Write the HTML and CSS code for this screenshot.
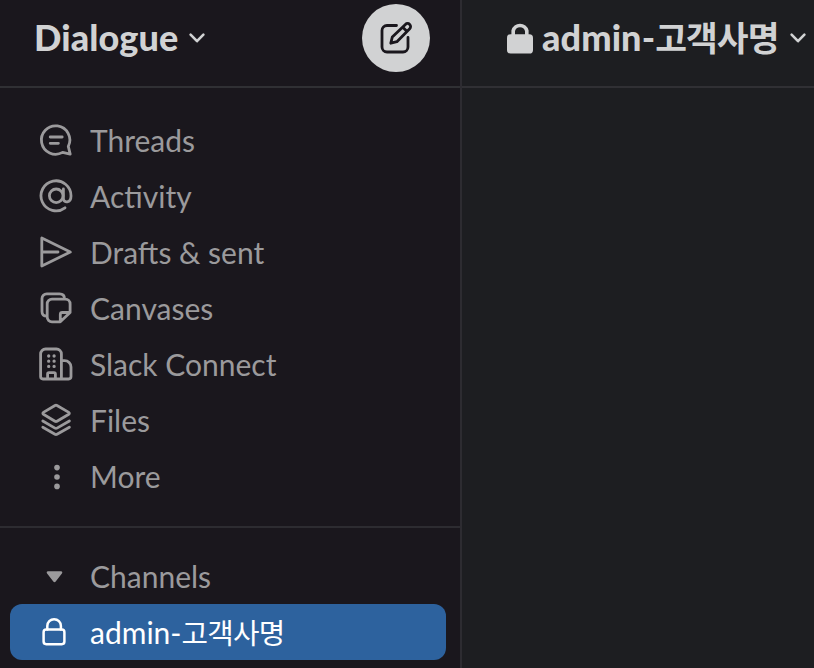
FILE: index.html
```html
<!DOCTYPE html>
<html lang="en">
<head>
<meta charset="utf-8">
<title>Dialogue</title>
<link rel="stylesheet" href="styles.css">
</head>
<body>
<div class="app">
  <aside class="sidebar">
    <header class="bar workspace">
      <h1 class="title">Dialogue</h1>
      <svg class="chevron" viewBox="0 0 20 14"><path d="M3.6 3.6 10 10.2 16.4 3.6"/></svg>
      <button class="compose" aria-label="New message">
        <svg class="icon" viewBox="0 0 36 36"><path d="M18.5 5.5H9a5 5 0 0 0-5 5V27a5 5 0 0 0 5 5h16a5 5 0 0 0 5-5v-9.5"/><path d="M12.8 23.2 14.3 17 27.4 4.4a3 3 0 0 1 4.3 4.3L18.9 21.7ZM24.8 7.2l4 4"/></svg>
      </button>
    </header>
    <nav class="nav">
      <a class="row"><svg class="icon" viewBox="0 0 36 36"><path d="M30.3 24.4A14.2 14.2 0 1 0 24.6 30.4L32.2 32.2ZM12.2 15h12M12.2 21.3h8.2"/></svg><span>Threads</span></a>
      <a class="row"><svg class="icon" viewBox="0 0 36 36"><circle cx="18.2" cy="17.8" r="6.8"/><path d="M25.4 11v9.2c0 5.4 7.6 5.2 7.6-2.2A15 15 0 1 0 27 29.8"/></svg><span>Activity</span></a>
      <a class="row"><svg class="icon" viewBox="0 0 36 36"><path d="M3.8 4V32L32.3 18ZM3.8 18H20"/></svg><span>Drafts &amp; sent</span></a>
      <a class="row"><svg class="icon" viewBox="0 0 36 36"><path d="M8.8 26.2C5.6 26.2 4 24.4 4 21.5V8.5A4.7 4.7 0 0 1 8.7 3.8H21.5C24.6 3.8 26.5 5.6 26.5 8.8M22.3 31.8H14a4.8 4.8 0 0 1-4.8-4.8V14A4.8 4.8 0 0 1 14 9.2H27.3A4.8 4.8 0 0 1 32.1 14v8.5ZM22.3 31.8V24.5a2 2 0 0 1 2-2h7.8"/></svg><span>Canvases</span></a>
      <a class="row"><svg class="icon" viewBox="0 0 36 36"><path d="M23.4 33H5a2.4 2.4 0 0 1-2.4-2.4V8A5 5 0 0 1 7.6 3H18.4a5 5 0 0 1 5 5ZM23.4 14.6h3.2a6.4 6.4 0 0 1 6.4 6.4v9.6A2.4 2.4 0 0 1 30.6 33h-7.2M9.6 33v-5a1.4 1.4 0 0 1 1.4-1.4h5a1.4 1.4 0 0 1 1.4 1.4v5"/><path class="dots" d="M10.7 10h0M16.1 10h0M10.7 15.2h0M16.1 15.2h0M10.7 20.4h0M16.1 20.4h0"/></svg><span>Slack Connect</span></a>
      <a class="row"><svg class="icon" viewBox="0 0 36 36"><path d="M17 3.5 5.4 10.4a1.1 1.1 0 0 0 0 1.9L17 19.2a2 2 0 0 0 2 0l11.8-6.9a1.1 1.1 0 0 0 0-1.9L19 3.5a2 2 0 0 0-2 0ZM4.8 19 17 26.1a2 2 0 0 0 2 0L31.4 19M4.8 25.2 17 32.3a2 2 0 0 0 2 0l12.4-7.1"/></svg><span>Files</span></a>
      <a class="row"><svg class="icon solid" viewBox="0 0 36 36"><circle cx="19" cy="9.6" r="2.8"/><circle cx="19" cy="19" r="2.8"/><circle cx="19" cy="28.4" r="2.8"/></svg><span>More</span></a>
    </nav>
    <section class="channels">
      <a class="row"><svg class="icon solid" viewBox="0 0 36 36"><path d="M10 13.3h13c1.3 0 1.7 1.2.9 2.1l-6.2 8.1q-1.2 1.6-2.4 0L9.1 15.4c-.8-.9-.4-2.1.9-2.1Z"/></svg><span>Channels</span></a>
      <a class="row selected"><svg class="icon" viewBox="0 0 36 36"><rect x="5.6" y="15.6" width="20.8" height="14.6" rx="2.6"/><path d="M9.3 15.6V12a6.8 6.8 0 0 1 13.6 0v3.6"/></svg><span>admin-<span class="ko" lang="ko">고객사명</span></span></a>
    </section>
  </aside>
  <main class="main">
    <header class="bar channel">
      <svg class="lock" viewBox="0 0 26 32"><rect x="0" y="12.2" width="26" height="19.3" rx="3.6"/><path d="M6.2 13V8.8a7 7 0 0 1 13.6 0V13"/></svg>
      <h2 class="title">admin-<span class="ko" lang="ko">고객사명</span></h2>
      <svg class="chevron" viewBox="0 0 20 14"><path d="M3.6 3.6 10 10.2 16.4 3.6"/></svg>
    </header>
  </main>
</div>
</body>
</html>
```
FILE: styles.css
```css
* { box-sizing: border-box; }

body {
  margin: 0;
  background: #1a171d;
  font-family: Lato, "Noto Sans CJK KR", sans-serif;
  font-size: 30px;
  line-height: 36px;
}

.app {
  display: grid;
  grid-template-columns: 462px 1fr;
  height: 668px;
  overflow: hidden;
  white-space: nowrap;
}

.sidebar {
  background: #1a171d;
  border-right: 2px solid #2d2c31;
  color: #9b9a9c;
}

.main { background: #1d1e21; min-width: 0; }

.bar {
  display: flex;
  align-items: center;
  height: 88px;
  padding-bottom: 10px;
  border-bottom: 2px solid #303034;
  color: #d1d2d3;
}

.workspace { padding-left: 34px; padding-right: 30px; }
.channel { padding-left: 45px; }

.title {
  margin: -2px 0 0;
  font-size: 36px;
  font-weight: 900;
  line-height: 44px;
  letter-spacing: 0.1px;
}

.ko {
  font-size: 0.96em;
  letter-spacing: -0.027em;
}
.title .ko { font-weight: 700; }

.chevron {
  flex: none;
  width: 20px;
  height: 14px;
  margin-left: 9px;
  margin-top: -1px;
  fill: none;
  stroke: #d1d2d3;
  stroke-width: 2.6;
  stroke-linecap: round;
  stroke-linejoin: round;
}

.compose {
  display: grid;
  place-items: center;
  width: 68px;
  height: 68px;
  margin-left: auto;
  padding: 0;
  border: 0;
  border-radius: 50%;
  background: #d1d2d3;
  color: #1a171d;
}

.lock {
  flex: none;
  width: 26px;
  height: 32px;
  margin-right: 9px;
  margin-top: -1px;
}
.lock rect { fill: #d1d2d3; }
.lock path { fill: none; stroke: #d1d2d3; stroke-width: 3.6; }

.icon {
  flex: none;
  width: 36px;
  height: 36px;
  fill: none;
  stroke: currentColor;
  stroke-width: 2.8;
  stroke-linecap: round;
  stroke-linejoin: round;
}
.icon.solid { fill: currentColor; stroke: none; }
.icon .dots { stroke-width: 3.3; }

.nav {
  padding: 24px 10px 22px 10px;
  border-bottom: 2px solid #2d2c31;
}

.channels { padding: 20px 14px 0 10px; }

.row {
  display: flex;
  align-items: center;
  gap: 16px;
  height: 56px;
  padding-left: 28px;
}

.selected {
  border-radius: 12px;
  background: #2d629e;
  color: #fff;
}
.selected .icon { stroke-width: 2.5; }
```
